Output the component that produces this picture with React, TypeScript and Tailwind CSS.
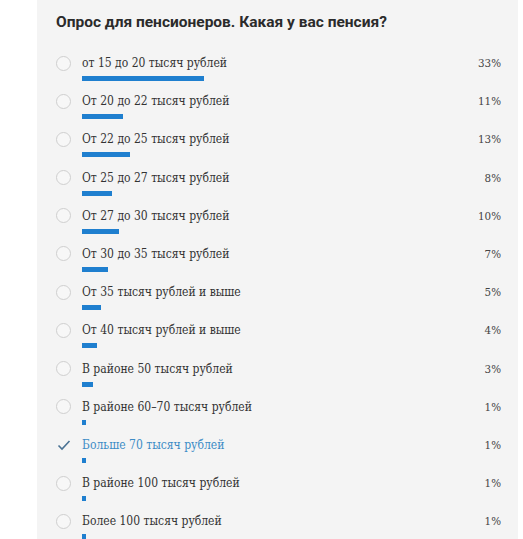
import React from "react";

type Option = {
  label: string;
  percent: number;
  voted?: boolean;
};

const options: Option[] = [
  { label: "от 15 до 20 тысяч рублей", percent: 33 },
  { label: "От 20 до 22 тысяч рублей", percent: 11 },
  { label: "От 22 до 25 тысяч рублей", percent: 13 },
  { label: "От 25 до 27 тысяч рублей", percent: 8 },
  { label: "От 27 до 30 тысяч рублей", percent: 10 },
  { label: "От 30 до 35 тысяч рублей", percent: 7 },
  { label: "От 35 тысяч рублей и выше", percent: 5 },
  { label: "От 40 тысяч рублей и выше", percent: 4 },
  { label: "В районе 50 тысяч рублей", percent: 3 },
  { label: "В районе 60–70 тысяч рублей", percent: 1 },
  { label: "Больше 70 тысяч рублей", percent: 1, voted: true },
  { label: "В районе 100 тысяч рублей", percent: 1 },
  { label: "Более 100 тысяч рублей", percent: 1 },
];

const slab = { fontFamily: '"DejaVu Serif", serif' };

const PollRow: React.FC<{ option: Option }> = ({ option }) => (
  <li className="flex items-start">
    <div className="w-[26px] h-[18px] flex items-center">
      {option.voted ? (
        <svg width="14" height="14" viewBox="0 0 14 14" className="ml-[1px]">
          <polyline
            points="1.5,7.5 5,11 12.5,3"
            fill="none"
            stroke="#4a7293"
            strokeWidth="1.6"
          />
        </svg>
      ) : (
        <span className="block w-[15px] h-[15px] rounded-full border border-[#cfcfcf] bg-[#f7f7f7]" />
      )}
    </div>
    <div className="flex-1">
      <div className="flex justify-between h-[18px] items-center">
        <span
          className={
            "text-[12px] leading-[18px] font-stretch-condensed " +
            (option.voted ? "text-[#3d8cc6]" : "text-[#333]")
          }
          style={slab}
        >
          {option.label}
        </span>
        <span
          className="text-[11.5px] leading-[18px] font-stretch-condensed text-[#444]"
          style={slab}
        >
          {option.percent}%
        </span>
      </div>
      <div className="mt-[4px] h-[5px] mb-[11.2px]">
        <div
          className="h-full bg-[#1f7fcf]"
          style={{ width: `${Math.max(3, option.percent * 3.7)}px` }}
        />
      </div>
    </div>
  </li>
);

export default function App() {
  return (
    <div className="bg-white w-[523px] h-[539px] overflow-hidden">
      <div className="ml-[37px] w-[481px] h-full bg-[#f4f4f4] pt-[12px] pl-[19px] pr-[17px]">
        <h2
          className="text-[15.5px] leading-[20px] font-bold text-[#2b2b2b]"
          style={{ fontFamily: "Roboto, Arial, sans-serif" }}
        >
          Опрос для пенсионеров. Какая у вас пенсия?
        </h2>
        <ul className="mt-[22px]">
          {options.map((o) => (
            <PollRow key={o.label} option={o} />
          ))}
        </ul>
      </div>
    </div>
  );
}
